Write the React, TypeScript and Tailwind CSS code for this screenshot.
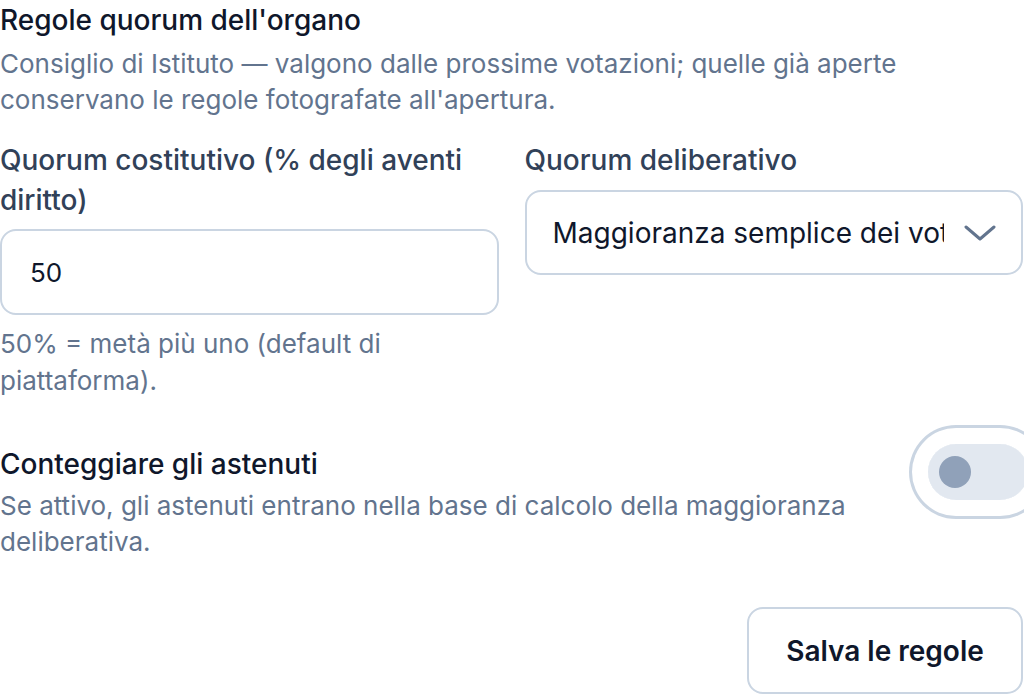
export default function App() {
  return (
    <div className="w-[1024px] h-[696px] overflow-hidden bg-white font-['Inter',sans-serif]">
      <div className="w-[1023px]">
        {/* Header */}
        <h2 className="text-[28px] leading-[36px] text-slate-900 font-medium pt-[2px]">Regole quorum dell'organo</h2>
        <p className="mt-[8px] text-[26px] leading-[36px] text-slate-500">
          Consiglio di Istituto — valgono dalle prossime votazioni; quelle già aperte conservano le regole fotografate all'apertura.
        </p>

        {/* Quorum fields */}
        <div className="mt-[22px] grid grid-cols-2 gap-[26px]">
          <div>
            <label className="block text-[28px] leading-[40px] text-slate-700 font-medium">
              Quorum costitutivo (% degli aventi diritto)
            </label>
            <input
              defaultValue="50"
              className="mt-[9px] w-full h-[86px] rounded-[16px] border-2 border-slate-300 px-[28px] text-[26px] text-slate-900 outline-none"
            />
            <p className="mt-[10px] text-[26px] leading-[37px] text-slate-500 w-[420px]">
              50% = metà più uno (default di piattaforma).
            </p>
          </div>
          <div>
            <label className="block text-[28px] leading-[40px] text-slate-700 font-medium">Quorum deliberativo</label>
            <div className="mt-[10px] h-[85px] rounded-[16px] border-2 border-slate-300 flex items-center pl-[26px] pr-[25px] gap-[20px]">
              <span className="flex-1 overflow-hidden whitespace-nowrap text-[28px] text-slate-900">
                Maggioranza semplice dei voti validi
              </span>
              <svg width="32" height="18" viewBox="0 0 32 18" fill="none" className="shrink-0 text-slate-500">
                <path d="M2 3 L16 15 L30 3" stroke="currentColor" strokeWidth="3" strokeLinecap="round" strokeLinejoin="round" />
              </svg>
            </div>
          </div>
        </div>

        {/* Abstentions toggle */}
        <div className="mt-[44px] flex items-start justify-between">
          <div className="pt-[1px] w-[880px]">
            <p className="text-[28px] leading-[40px] text-slate-900 font-medium">Conteggiare gli astenuti</p>
            <p className="mt-[4px] text-[26px] leading-[36px] text-slate-500">
              Se attivo, gli astenuti entrano nella base di calcolo della maggioranza deliberativa.
            </p>
          </div>
          <button className="-mr-[5px] mt-[1px] shrink-0 rounded-full ring-[3px] ring-slate-300 ring-offset-[16px] ring-offset-white">
            <span className="flex h-[56px] w-[100px] items-center rounded-full bg-slate-200 px-[11px]">
              <span className="h-[32px] w-[32px] rounded-full bg-slate-400" />
            </span>
          </button>
        </div>

        {/* Save */}
        <div className="mt-[47px] flex justify-end">
          <button className="h-[87px] w-[276px] rounded-[16px] border-2 border-slate-300 text-[28px] font-semibold text-slate-900">
            Salva le regole
          </button>
        </div>
      </div>
    </div>
  );
}
